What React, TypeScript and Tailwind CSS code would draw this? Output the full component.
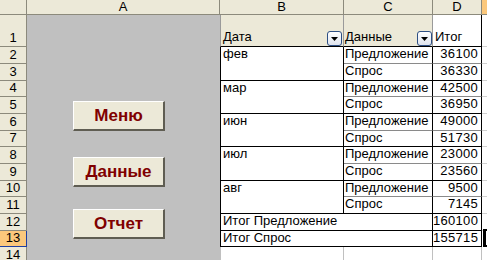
import React from 'react';

const months = [
  { label: 'фев', offer: 36100, demand: 36330 },
  { label: 'мар', offer: 42500, demand: 36950 },
  { label: 'июн', offer: 49000, demand: 51730 },
  { label: 'июл', offer: 23000, demand: 23560 },
  { label: 'авг', offer: 9500, demand: 7145 },
];

const hdr = 'bg-[#ece9d8] border-r border-b border-[#8c8a7c] flex justify-center text-black';

function RowHead({ n, active }: { n: number; active?: boolean }) {
  if (active) {
    return (
      <div className="bg-[#fbc87c] border-r border-b border-[#1f3fa0] flex items-end justify-center leading-[14px] pb-[1px]">
        {n}
      </div>
    );
  }
  return <div className={`${hdr} items-end leading-[14px] pb-[1px]`}>{n}</div>;
}

function DropButton() {
  return (
    <div className="w-[15px] h-[15px] rounded-[3px] border border-[#2d4f84] bg-gradient-to-b from-white to-[#dfe4ee] flex items-center justify-center">
      <svg width="7" height="4" viewBox="0 0 7 4">
        <path d="M0 0h7L3.5 4z" fill="#000" />
      </svg>
    </div>
  );
}

function MacroButton({ label, className }: { label: string; className?: string }) {
  return (
    <div
      className={`w-[92px] h-[30px] bg-[#ece9d8] border-t border-l border-white border-r-2 border-b-2 border-r-[#5f5d52] border-b-[#5f5d52] flex items-center justify-center text-[17px] font-bold text-[#800000] ${className ?? ''}`}
    >
      {label}
    </div>
  );
}

function Num({ v, last }: { v: number; last?: boolean }) {
  return (
    <div
      className={`border-r border-black border-b ${last ? 'border-b-black' : 'border-b-[#8a8a8a]'} text-right pr-[3px] leading-[14px] tracking-[0.3px]`}
    >
      {v}
    </div>
  );
}

function Grid() {
  return (
    <div className="w-[487px] h-[260px] overflow-hidden bg-white">
      <div
        className="grid grid-cols-[27px_193px_124px_89px_49px_1fr] grid-rows-[15px_32px_17px_17px_16px_17px_17px_16px_17px_17px_16px_17px_17px_16px_17px] text-[13px] text-black"
        style={{ fontFamily: '"Liberation Sans", Arial, sans-serif' }}
      >
        {/* column headers */}
        <div className={hdr} />
        <div className={`${hdr} leading-[14px]`}>A</div>
        <div className={`${hdr} leading-[14px]`}>B</div>
        <div className={`${hdr} leading-[14px]`}>C</div>
        <div className={`${hdr} leading-[14px]`}>D</div>
        <div className="bg-[#fbc87c] border-b border-[#8c8a7c]" />

        {/* row 1 */}
        <RowHead n={1} />
        <div className="row-span-14 bg-[#c0c0c0] flex flex-col pl-[46px] pt-[86px]">
          <MacroButton label="Меню" />
          <MacroButton label="Данные" className="mt-[26px]" />
          <MacroButton label="Отчет" className="mt-[22px]" />
        </div>
        <div className="bg-[#ece9d8] border-l border-r border-[#9a9a9a] border-b border-b-black flex items-end justify-between pl-[2px] pr-[1px]">
          <span className="leading-[14px] pb-[2px]">Дата</span>
          <DropButton />
        </div>
        <div className="bg-[#ece9d8] border-r border-[#9a9a9a] border-b border-b-black flex items-end justify-between pl-[1px] pr-[0px]">
          <span className="leading-[14px] pb-[2px]">Данные</span>
          <DropButton />
        </div>
        <div className="border-r border-b border-black flex items-end pl-[2px]">
          <span className="leading-[14px] pb-[2px]">Итог</span>
        </div>
        <div className="border-b border-[#d0d0d0]" />

        {/* data rows */}
        {months.map((m, i) => (
          <React.Fragment key={m.label}>
            <RowHead n={i * 2 + 2} />
            <div className="row-span-2 border-l border-r border-b border-black pl-[2px] leading-[14px]">
              {m.label}
            </div>
            <div className="border-r border-black border-b border-b-[#8a8a8a] pl-[1px] leading-[14px]">Предложение</div>
            <Num v={m.offer} />
            <div className="border-b border-[#d0d0d0]" />

            <RowHead n={i * 2 + 3} />
            <div className="border-r border-b border-black pl-[1px] leading-[14px]">Спрос</div>
            <Num v={m.demand} last />
            <div className="border-b border-[#d0d0d0]" />
          </React.Fragment>
        ))}

        {/* totals */}
        <RowHead n={12} />
        <div className="col-span-2 border-l border-r border-b border-black pl-[2px] leading-[14px]">Итог Предложение</div>
        <Num v={160100} last />
        <div className="border-b border-[#d0d0d0]" />

        <RowHead n={13} active />
        <div className="col-span-2 border-l border-r border-b border-black pl-[2px] leading-[14px]">Итог Спрос</div>
        <Num v={155715} last />
        <div className="border-l-[3px] border-t-2 border-b-2 border-black -mt-[2px] ml-[1px]" />

        {/* row 14 */}
        <RowHead n={14} />
        <div className="border-l border-r border-[#c0c0c0]" />
        <div className="border-r border-[#c0c0c0]" />
        <div className="border-r border-[#c0c0c0]" />
        <div />
      </div>
    </div>
  );
}

export default function App() {
  return <Grid />;
}
